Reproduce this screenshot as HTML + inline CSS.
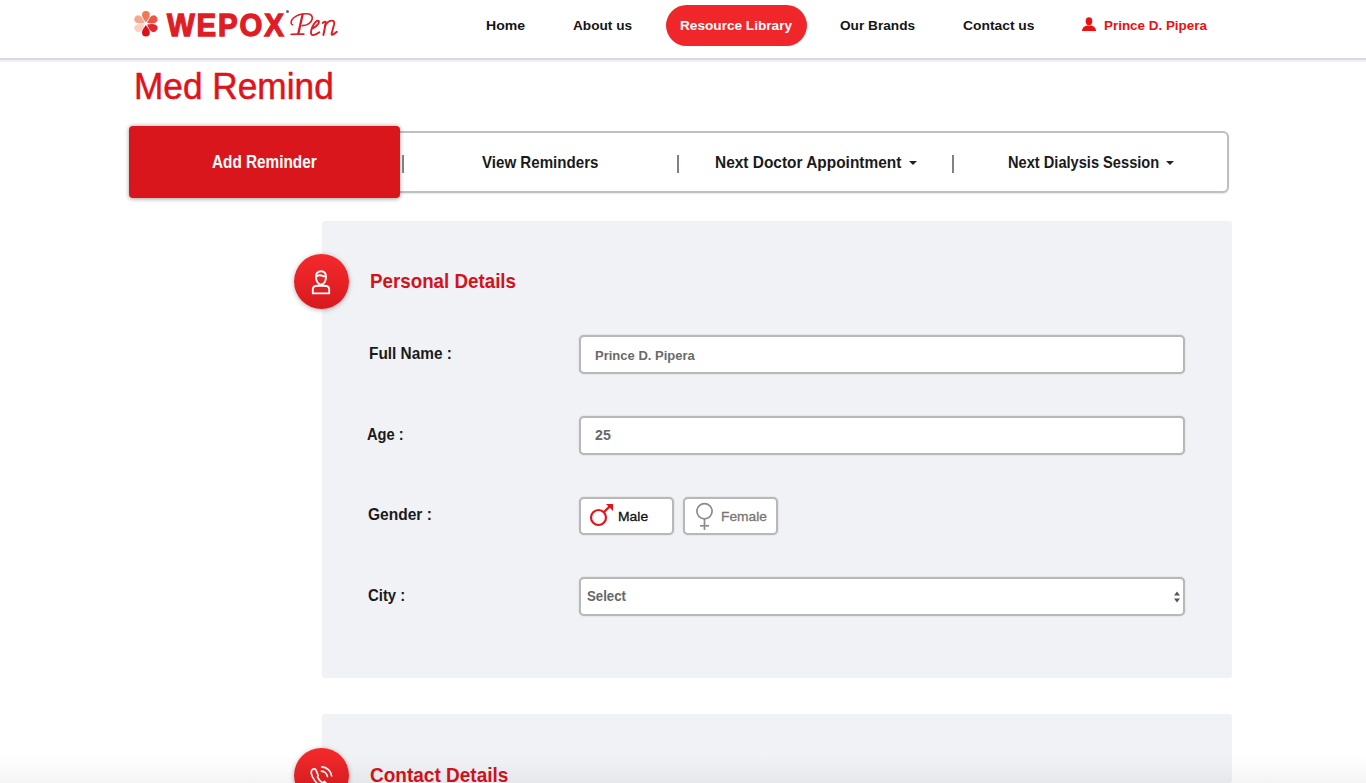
<!DOCTYPE html>
<html><head><meta charset="utf-8">
<style>
*{box-sizing:border-box;margin:0;padding:0}
html,body{width:1366px;height:783px;overflow:hidden;background:#fff;font-family:"Liberation Sans",sans-serif}
.abs{position:absolute}
.t{position:absolute;white-space:nowrap;line-height:1;transform-origin:0 0}
.header{position:absolute;left:0;top:0;width:1366px;height:60px;background:#fff;border-bottom:2px solid #dad8e2}
.hshadow{position:absolute;left:0;top:60px;width:1366px;height:2px;background:#f2f0f7}
.pill{position:absolute;left:666px;top:5px;width:141px;height:41px;border-radius:21px;background:#ef272b}
.tabs{position:absolute;left:130px;top:131px;width:1099px;height:62px;border:2px solid #bfbfbf;border-radius:6px;background:#fff;box-shadow:0 1px 2px rgba(0,0,0,0.1)}
.addrem{position:absolute;left:129px;top:126px;width:271px;height:72px;background:#d9161c;border-radius:4px;box-shadow:0 0.5px 4px rgba(0,0,0,0.38)}
.sep{position:absolute;top:155px;width:1.6px;height:18px;background:#7d818a}
.panel{position:absolute;left:322px;width:910px;background:#f1f2f5;border-radius:3px}
.circle{position:absolute;width:55px;height:55px;border-radius:50%;background:linear-gradient(#f42a2c,#d8191e);box-shadow:0 1px 5px rgba(0,0,0,0.3)}
.input{position:absolute;left:579px;width:606px;height:38.5px;background:#fff;border:2px solid #b8b8b8;border-radius:5px;box-shadow:0 0 1.5px rgba(0,0,0,0.22)}
.gbtn{position:absolute;top:496.5px;width:94.5px;height:38.5px;background:#fff;border:2px solid #b8b8b8;border-radius:5px;box-shadow:0 0 1.5px rgba(0,0,0,0.22)}
.caret{position:absolute;width:0;height:0;border-left:4px solid transparent;border-right:4px solid transparent;border-top:4px solid #222}
.bfade{position:absolute;left:0;top:755px;width:1366px;height:28px;background:linear-gradient(rgba(0,0,0,0),rgba(0,0,0,0.045))}
</style></head><body>
<div class="header"></div>
<div class="hshadow"></div>
<!-- logo flower -->
<svg class="abs" style="left:128px;top:6px" width="40" height="36" viewBox="0 0 40 36">
  <g transform="translate(17.9,17.7)">
    <path transform="rotate(0)" d="M0,-1.4 C-1.4,-3.4 -3.9,-6.4 -3.9,-8.8 A3.9,3.9 0 0 1 3.9,-8.8 C3.9,-6.4 1.4,-3.4 0,-1.4Z" fill="#f07858"/>
    <path transform="rotate(60)" d="M0,-1.4 C-1.4,-3.4 -3.9,-6.4 -3.9,-8.8 A3.9,3.9 0 0 1 3.9,-8.8 C3.9,-6.4 1.4,-3.4 0,-1.4Z" fill="#ef5546"/>
    <path transform="rotate(120)" d="M0,-1.4 C-1.4,-3.4 -3.9,-6.4 -3.9,-8.8 A3.9,3.9 0 0 1 3.9,-8.8 C3.9,-6.4 1.4,-3.4 0,-1.4Z" fill="#e5262e"/>
    <path transform="rotate(180)" d="M0,-1.4 C-1.4,-3.4 -3.9,-6.4 -3.9,-8.8 A3.9,3.9 0 0 1 3.9,-8.8 C3.9,-6.4 1.4,-3.4 0,-1.4Z" fill="#df0e1b"/>
    <path transform="rotate(240)" d="M0,-1.4 C-1.4,-3.4 -3.9,-6.4 -3.9,-8.8 A3.9,3.9 0 0 1 3.9,-8.8 C3.9,-6.4 1.4,-3.4 0,-1.4Z" fill="#fbcfc3"/>
    <path transform="rotate(300)" d="M0,-1.4 C-1.4,-3.4 -3.9,-6.4 -3.9,-8.8 A3.9,3.9 0 0 1 3.9,-8.8 C3.9,-6.4 1.4,-3.4 0,-1.4Z" fill="#f7a68e"/>
  </g>
</svg>
<div class="abs" style="left:286px;top:10px;width:3px;height:3px;border-radius:50%;background:#666"></div>
<svg class="abs" style="left:288px;top:8px" width="52" height="32" viewBox="0 0 52 32">
  <g fill="none" stroke="#d91f29" stroke-linecap="round" stroke-linejoin="round">
    <path stroke-width="1.6" d="M4.4,16.8 C2.4,16.2 2.6,12.6 5.5,10 C9,7 15,5.6 19.5,5.8 C23,6 24.8,8 24.2,11 C23.5,14.5 19.5,17.6 14.2,17.6"/>
    <path stroke-width="2.3" d="M14.6,6.6 L10.3,25.8"/>
    <path stroke-width="1.7" d="M3.2,26.4 C6,26.1 12,26 15.8,26.2"/>
    <path stroke-width="1.9" d="M24.2,20.6 C26.8,19.5 31,16.2 31,13.9 C31,12.6 29.4,12.4 28.1,13.5 C25,16 22.6,22 23,25.3 C23.4,28 27,27.6 31.3,24.3"/>
    <path stroke-width="2" d="M34.8,14.9 C36,13.6 38,13 37.8,15 L35.4,27"/>
    <path stroke-width="1.9" d="M36.8,18.2 C38.4,15 40.6,12.8 43.4,12.6 C46,12.5 46.6,14 46.1,16.2 L43.6,25.8 C43.3,27.6 45.2,27 48.8,23.8"/>
  </g>
</svg>
<div class="pill"></div>
<!-- user icon -->
<svg class="abs" style="left:1081px;top:17px" width="16" height="15" viewBox="0 0 16 15">
  <ellipse cx="8" cy="4.2" rx="3.3" ry="4" fill="#ee1010"/>
  <path d="M1,14 C1,10.5 4,9 6,8.6 L10,8.6 C12,9 15,10.5 15,14 Z" fill="#ee1010"/>
</svg>

<div class="tabs"></div>
<div class="addrem"></div>
<div class="sep" style="left:402px"></div>
<div class="sep" style="left:677px"></div>
<div class="sep" style="left:952px"></div>
<div class="caret" style="left:908.5px;top:161px"></div>
<div class="caret" style="left:1165.5px;top:161px"></div>

<div class="panel" style="top:221px;height:456.5px"></div>
<div class="circle" style="left:294px;top:254px"></div>
<!-- person icon -->
<svg class="abs" style="left:306px;top:267px" width="30" height="30" viewBox="0 0 30 30">
  <g fill="none" stroke="#fff" stroke-width="1.9" stroke-linejoin="round">
    <path d="M15,4.2 C18.2,4.2 20,6.6 20,10 C20,13.8 17.8,17.6 15,17.6 C12.2,17.6 10,13.8 10,10 C10,6.6 11.8,4.2 15,4.2Z"/>
    <path d="M10.3,9.6 C12,8.2 14.2,7.8 16.8,9 C17.8,9.4 19,9.4 19.8,9"/>
    <path d="M15,17 L15,18.5"/>
    <path d="M6.8,26.4 L6.8,22.2 C6.8,19.8 8.8,18.8 12,18.8 L18,18.8 C21.2,18.8 23.2,19.8 23.2,22.2 L23.2,26.4 Z"/>
  </g>
</svg>

<div class="input" style="top:335px"></div>
<div class="input" style="top:416px"></div>
<div class="gbtn" style="left:579px"></div>
<div class="gbtn" style="left:683px"></div>
<!-- male icon -->
<svg class="abs" style="left:586px;top:501px" width="32" height="30" viewBox="0 0 32 30">
  <g stroke="#e0141b" stroke-width="2.2" fill="none">
    <circle cx="12.5" cy="16.5" r="7.5"/>
    <path d="M18,11 L25,4"/>
  </g>
  <path d="M20,3 L27,3 L27,10 Z" fill="#e0141b"/>
</svg>
<!-- female icon -->
<svg class="abs" style="left:690px;top:500px" width="32" height="34" viewBox="0 0 32 34">
  <g stroke="#8c8c8c" stroke-width="1.7" fill="none">
    <circle cx="14.5" cy="11.3" r="7.6"/>
    <path d="M14.5,19 L14.5,30"/>
    <path d="M10,25.8 L19,25.8"/>
  </g>
</svg>
<div class="input" style="top:577px"></div>
<!-- select arrows -->
<svg class="abs" style="left:1172px;top:589.5px" width="10" height="14" viewBox="0 0 10 14">
  <path d="M2,5.5 L5,1.5 L8,5.5Z M2,8.5 L5,12.5 L8,8.5Z" fill="#555"/>
</svg>

<div class="panel" style="top:714px;height:69px"></div>
<div class="circle" style="left:294px;top:748px"></div>
<!-- phone icon -->
<svg class="abs" style="left:306px;top:760px" width="30" height="30" viewBox="0 0 30 30">
  <g fill="none" stroke="#fff" stroke-width="1.7" stroke-linecap="round" stroke-linejoin="round">
    <path d="M12.2,15.5 L10,10.2 C9.3,8.8 7.5,8.5 6.3,9.6 C5,10.8 5,13.5 6.3,16.5 C8.5,21 12,25 16.5,27.5 C19,29 21.5,28.5 22.5,27 L23.2,26 L18.5,21.5 L16.5,23 C14,21.5 12.5,19 11.5,17 Z"/>
    <path d="M15.5,11.2 C18.5,11.4 21,13.8 21.4,16.5"/>
    <path d="M15.8,6.9 C20.8,7.1 25.2,11.2 25.6,16"/>
  </g>
</svg>
<div class="t" style='left:485.76px;top:18.90px;font-size:13.5px;font-weight:bold;color:#151515;transform:scaleX(1.0389);'>Home</div>
<div class="t" style='left:572.99px;top:18.90px;font-size:13.5px;font-weight:bold;color:#151515;transform:scaleX(1.0105);'>About us</div>
<div class="t" style='left:840.09px;top:18.90px;font-size:13.5px;font-weight:bold;color:#151515;transform:scaleX(1.0110);'>Our Brands</div>
<div class="t" style='left:962.98px;top:18.90px;font-size:13.5px;font-weight:bold;color:#151515;transform:scaleX(1.0250);'>Contact us</div>
<div class="t" style='left:679.99px;top:18.90px;font-size:13.5px;font-weight:bold;color:#ffffff;transform:scaleX(1.0091);'>Resource Library</div>
<div class="t" style='left:1103.61px;top:19.00px;font-size:13.5px;font-weight:bold;color:#ee1010;transform:scaleX(0.9942);'>Prince D. Pipera</div>
<div class="t" style='left:133.60px;top:68.50px;font-size:36.5px;color:#e0121a;transform:scaleX(0.9653);-webkit-text-stroke:0.5px #e0121a;'>Med Remind</div>
<div class="t" style='left:211.99px;top:152.40px;font-size:19.0px;font-weight:bold;color:#ffffff;transform:scaleX(0.8062);'>Add Reminder</div>
<div class="t" style='left:481.80px;top:153.80px;font-size:16.5px;font-weight:bold;color:#1a1a1a;transform:scaleX(0.9157);'>View Reminders</div>
<div class="t" style='left:715.06px;top:153.80px;font-size:16.5px;font-weight:bold;color:#1a1a1a;transform:scaleX(0.9354);'>Next Doctor Appointment</div>
<div class="t" style='left:1007.91px;top:153.80px;font-size:16.5px;font-weight:bold;color:#1a1a1a;transform:scaleX(0.8864);'>Next Dialysis Session</div>
<div class="t" style='left:370.08px;top:270.60px;font-size:20.5px;font-weight:bold;color:#d5121a;transform:scaleX(0.9152);'>Personal Details</div>
<div class="t" style='left:369.67px;top:765.00px;font-size:20.5px;font-weight:bold;color:#d5121a;transform:scaleX(0.9272);'>Contact Details</div>
<div class="t" style='left:368.57px;top:345.20px;font-size:16.5px;font-weight:bold;color:#1a1a1a;transform:scaleX(0.9326);'>Full Name :</div>
<div class="t" style='left:367.28px;top:426.80px;font-size:16.0px;font-weight:bold;color:#1a1a1a;transform:scaleX(0.9158);'>Age :</div>
<div class="t" style='left:367.86px;top:506.20px;font-size:16.5px;font-weight:bold;color:#1a1a1a;transform:scaleX(0.9415);'>Gender :</div>
<div class="t" style='left:367.87px;top:587.80px;font-size:16.0px;font-weight:bold;color:#1a1a1a;transform:scaleX(0.9316);'>City :</div>
<div class="t" style='left:595.44px;top:348.80px;font-size:13.5px;font-weight:bold;color:#6a6a6a;transform:scaleX(0.9641);'>Prince D. Pipera</div>
<div class="t" style='left:594.79px;top:428.40px;font-size:14.0px;font-weight:bold;color:#6a6a6a;transform:scaleX(1.0143);'>25</div>
<div class="t" style='left:587.35px;top:588.90px;font-size:14.0px;font-weight:bold;color:#676767;transform:scaleX(0.9450);'>Select</div>
<div class="t" style='left:617.77px;top:510.40px;font-size:13.5px;color:#111111;transform:scaleX(1.0286);-webkit-text-stroke:0.3px #111;'>Male</div>
<div class="t" style='left:721.18px;top:510.40px;font-size:13.5px;color:#767676;transform:scaleX(1.0186);-webkit-text-stroke:0.3px #767676;'>Female</div>
<div class="t" style='left:167.10px;top:9.60px;font-size:31.5px;font-weight:bold;color:#e01d24;transform:scaleX(0.9336);letter-spacing:2px;-webkit-text-stroke:1.3px #e01d24;'>WEPOX</div>
<div class="bfade"></div>
</body></html>
